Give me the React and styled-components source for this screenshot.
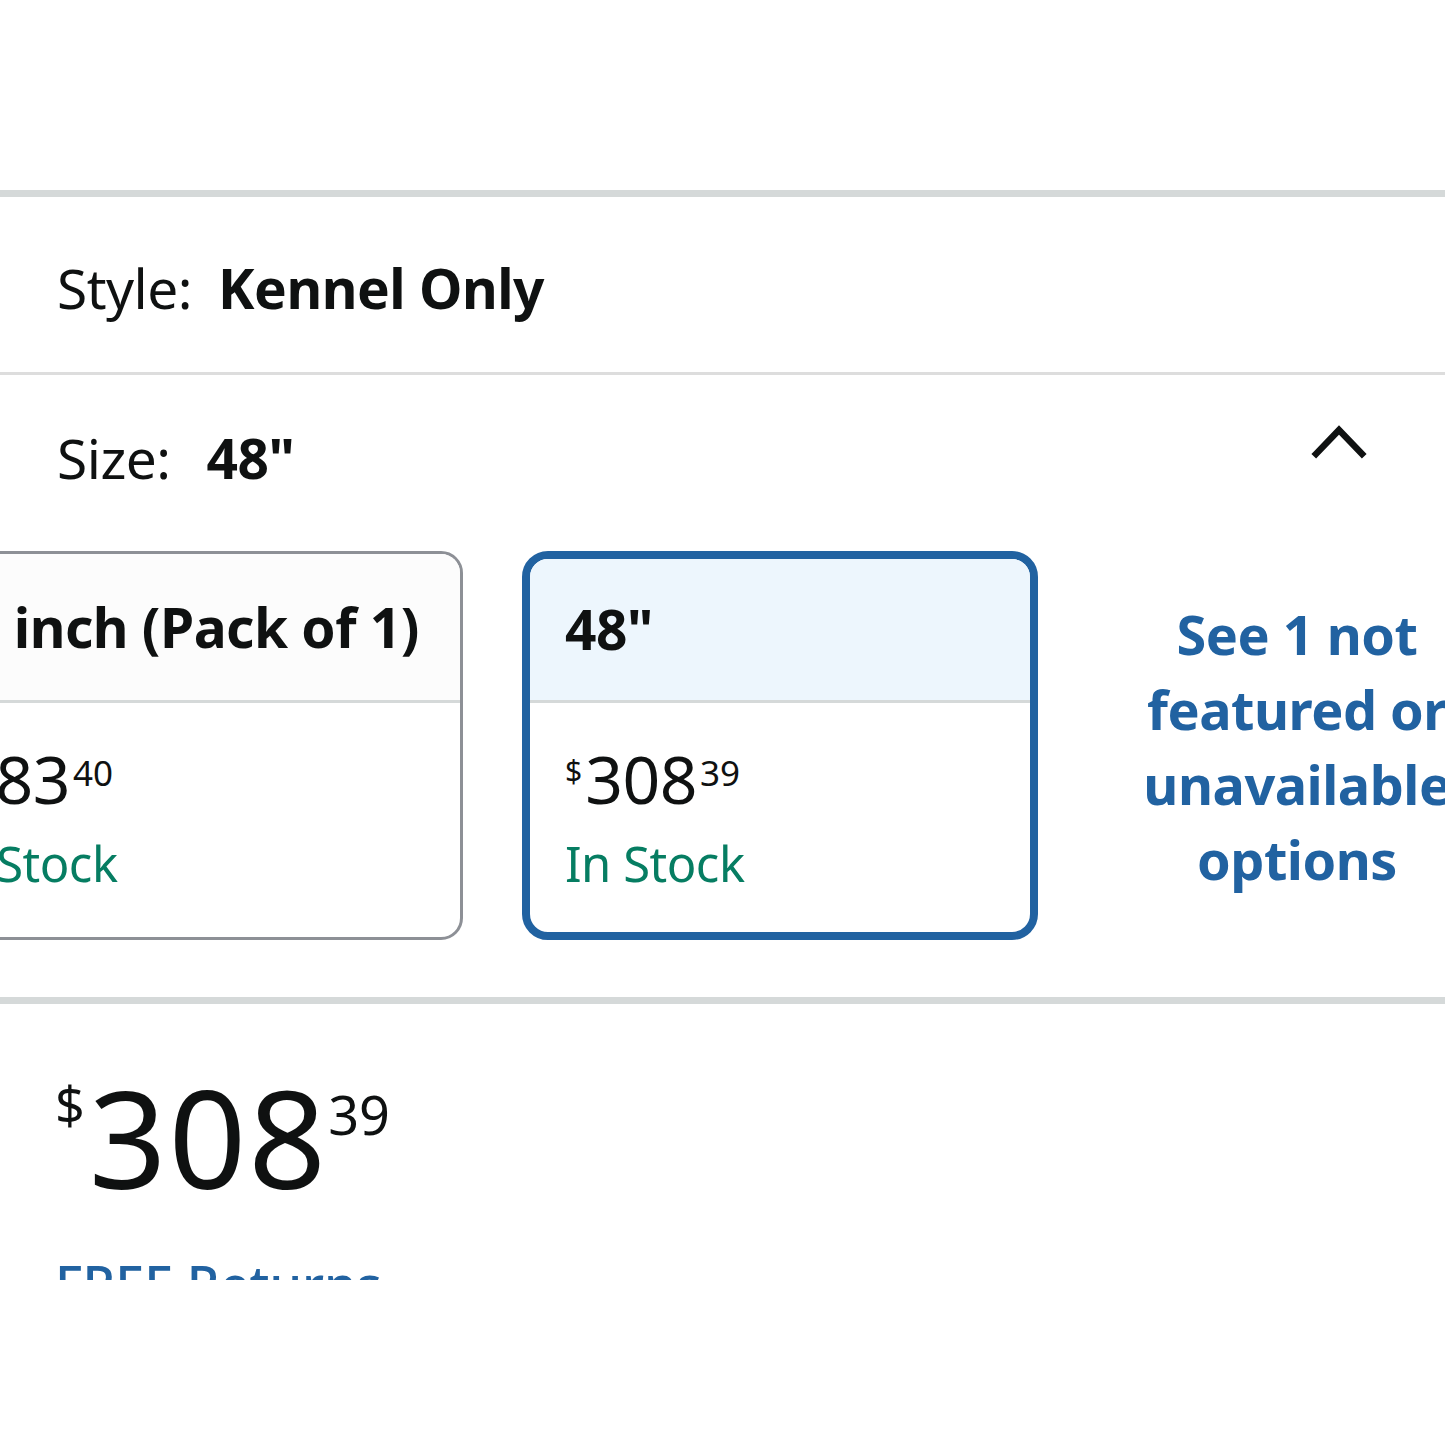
import styled, { createGlobalStyle } from "styled-components";

const azul = "#2162a1";
const verde = "#067d62";
const cinzaLinha = "#d5d9d9";

const Global = createGlobalStyle`
    html, body {
        margin: 0;
        padding: 0;
        background: #ffffff;
    }
    body {
        font-family: "Noto Sans", "Open Sans", Arial, sans-serif;
        color: #0f1111;
    }
`

const Pagina = styled.div`
    height: 1280px;
    overflow: hidden;
    padding-top: 190px;
    box-sizing: border-box;
`

const Divisor = styled.hr`
    margin: 0;
    border: 0;
    height: ${props => props.$grossa ? "7px" : "3px"};
    background: ${props => props.$grossa ? cinzaLinha : "#dddddd"};
`

const Linha = styled.div`
    display: flex;
    align-items: center;
    justify-content: space-between;
    height: ${props => props.$altura}px;
    padding: ${props => props.$topo || 0}px 78px 0 57px;
    box-sizing: border-box;
`

const Rotulo = styled.div`
    font-size: 55px;
    letter-spacing: -0.5px;
`

const Valor = styled.span`
    font-weight: 700;
    margin-left: ${props => props.$espaco}px;
`

const Icone = styled.div`
    display: flex;
    margin-bottom: 34px;
`

const Trilho = styled.div`
    display: flex;
    align-items: stretch;
    gap: 59px;
    margin: 11px 0 57px -100px;
`

const Cartao = styled.div`
    flex: 0 0 auto;
    width: ${props => props.$largura}px;
    height: 389px;
    box-sizing: border-box;
    border: ${props => props.$ativo ? `8px solid ${azul}` : "3px solid #8d9096"};
    border-radius: ${props => props.$ativo ? "26px" : "22px"};
    overflow: hidden;
    display: flex;
    flex-direction: column;
`

const CabecalhoCartao = styled.div`
    height: ${props => props.$altura}px;
    box-sizing: border-box;
    display: flex;
    align-items: center;
    padding: 0 0 2px 35px;
    background: ${props => props.$ativo ? "#edf6fd" : "#fcfcfc"};
    border-bottom: 3px solid ${cinzaLinha};
    font-size: 55px;
    font-weight: 700;
    white-space: nowrap;
    letter-spacing: -0.5px;
`

const CorpoCartao = styled.div`
    padding: 42px 0 0 35px;
`

const PrecoPequeno = styled.div`
    display: flex;
    align-items: flex-start;
    font-size: 66px;
    line-height: 66px;
    letter-spacing: -0.5px;
`

const Sobrescrito = styled.span`
    font-size: ${props => props.$tamanho}px;
    line-height: 1;
    margin-top: ${props => props.$topo}px;
    margin-right: ${props => props.$direita || 0}px;
    margin-left: ${props => props.$esquerda || 0}px;
    letter-spacing: 0;
`

const Estoque = styled.div`
    color: ${verde};
    font-size: 49px;
    line-height: 60px;
    margin-top: 22px;
    letter-spacing: -0.5px;
`

const LinkOpcoes = styled.a`
    flex: 0 0 auto;
    width: 400px;
    align-self: center;
    margin-top: 2px;
    color: ${azul};
    font-size: 54px;
    font-weight: 700;
    line-height: 75px;
    text-align: center;
    text-decoration: none;
    white-space: nowrap;
    letter-spacing: -0.5px;
`

const BlocoPreco = styled.div`
    padding: 68px 0 0 55px;
`

const PrecoGrande = styled.div`
    display: flex;
    align-items: flex-start;
    font-size: 136px;
    line-height: 130px;
    letter-spacing: 2px;
`

const Devolucao = styled.div`
    margin-top: 48px;
    color: ${azul};
    font-size: 52px;
    line-height: 68px;
    font-weight: 500;
`

const Seta = () => (
    <svg width="56" height="36" viewBox="0 0 56 36">
        <path d="M5 31 L28 7 L51 31" fill="none" stroke="#0f1111" strokeWidth="6.5" strokeLinecap="square" strokeLinejoin="miter" />
    </svg>
)

const Preco = ({ inteiro, centavos }) => (
    <PrecoPequeno>
        <Sobrescrito $tamanho={30} $topo={11} $direita={3}>$</Sobrescrito>
        {inteiro}
        <Sobrescrito $tamanho={35} $topo={10} $esquerda={3}>{centavos}</Sobrescrito>
    </PrecoPequeno>
)

const App = () => {
    return (
        <>
            <Global />
            <Pagina>
                <Divisor $grossa />
                <Linha $altura={175} $topo={6}>
                    <Rotulo>Style:<Valor $espaco={26}>Kennel Only</Valor></Rotulo>
                </Linha>
                <Divisor />
                <Linha $altura={165}>
                    <Rotulo>Size:<Valor $espaco={36}>48"</Valor></Rotulo>
                    <Icone><Seta /></Icone>
                </Linha>
                <Trilho>
                    <Cartao $largura={563}>
                        <CabecalhoCartao $altura={149}>36 inch (Pack of 1)</CabecalhoCartao>
                        <CorpoCartao>
                            <Preco inteiro="183" centavos="40" />
                            <Estoque>In Stock</Estoque>
                        </CorpoCartao>
                    </Cartao>
                    <Cartao $largura={516} $ativo>
                        <CabecalhoCartao $altura={144} $ativo>48"</CabecalhoCartao>
                        <CorpoCartao>
                            <Preco inteiro="308" centavos="39" />
                            <Estoque>In Stock</Estoque>
                        </CorpoCartao>
                    </Cartao>
                    <LinkOpcoes href="#">
                        See 1 not<br />featured or<br />unavailable<br />options
                    </LinkOpcoes>
                </Trilho>
                <Divisor $grossa />
                <BlocoPreco>
                    <PrecoGrande>
                        <Sobrescrito $tamanho={52} $topo={7} $direita={4}>$</Sobrescrito>
                        308
                        <Sobrescrito $tamanho={54} $topo={15}>39</Sobrescrito>
                    </PrecoGrande>
                    <Devolucao>FREE Returns</Devolucao>
                </BlocoPreco>
            </Pagina>
        </>
    );
}

export default App
